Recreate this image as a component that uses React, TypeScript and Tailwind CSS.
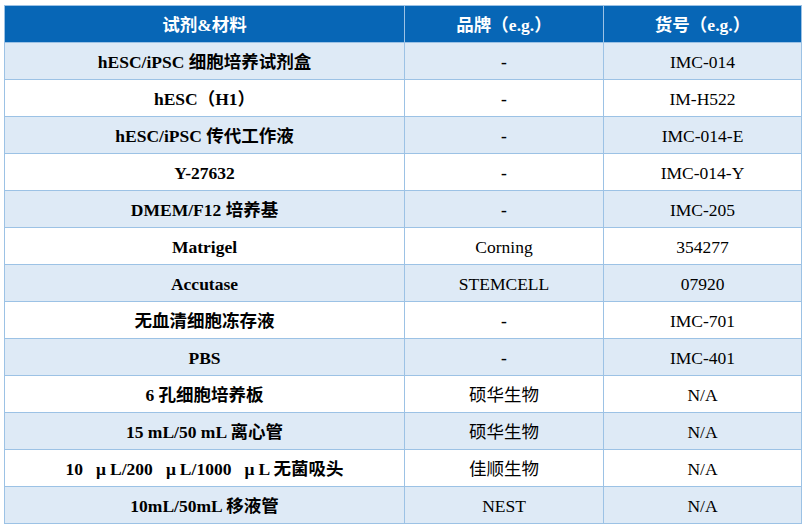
const rows: [string, string, string][] = [
  ["hESC/iPSC 细胞培养试剂盒", "-", "IMC-014"],
  ["hESC（H1）", "-", "IM-H522"],
  ["hESC/iPSC 传代工作液", "-", "IMC-014-E"],
  ["Y-27632", "-", "IMC-014-Y"],
  ["DMEM/F12 培养基", "-", "IMC-205"],
  ["Matrigel", "Corning", "354277"],
  ["Accutase", "STEMCELL", "07920"],
  ["无血清细胞冻存液", "-", "IMC-701"],
  ["PBS", "-", "IMC-401"],
  ["6 孔细胞培养板", "硕华生物", "N/A"],
  ["15 mL/50 mL 离心管", "硕华生物", "N/A"],
  ["tips", "佳顺生物", "N/A"],
  ["10mL/50mL 移液管", "NEST", "N/A"],
]

// the μ in the source table comes from a full-width CJK font
const Mu = () => <span className="mr-[4px] font-[Liberation_Serif]">μ</span>

function Tips() {
  return (
    <>
      10{"\u00a0\u00a0 "}
      <Mu />L/200{"\u00a0\u00a0 "}
      <Mu />L/1000{"\u00a0\u00a0 "}
      <Mu />L 无菌吸头
    </>
  )
}

export default function App() {
  return (
    <div
      className="w-[806px] h-[531px] bg-white pl-[4px] pt-[5px] text-[17.5px] text-black"
      style={{ fontFamily: '"Liberation Serif", "Noto Sans CJK SC", serif' }}
    >
      <table className="w-[797px] border-collapse table-fixed">
        <colgroup>
          <col className="w-[400px]" />
          <col className="w-[199px]" />
          <col className="w-[198px]" />
        </colgroup>
        <thead>
          <tr className="h-[37px] bg-[#0766b6] text-white font-bold">
            <th className="border border-[#9cc2e5] p-0 pt-[3px] font-bold">试剂&amp;材料</th>
            <th className="border border-[#9cc2e5] p-0 pt-[3px] font-bold">品牌（e.g.）</th>
            <th className="border border-[#9cc2e5] p-0 pt-[3px] font-bold">货号（e.g.）</th>
          </tr>
        </thead>
        <tbody>
          {rows.map(([name, brand, code], i) => (
            <tr key={i} className={`h-[37px] ${i % 2 === 0 ? "bg-[#deeaf6]" : "bg-white"}`}>
              <td className="border border-[#9cc2e5] p-0 pt-[3px] text-center font-bold whitespace-pre">
                {name === "tips" ? <Tips /> : name}
              </td>
              <td className={`border border-[#9cc2e5] p-0 pt-[3px] text-center ${brand === "-" ? "font-bold" : ""}`}>{brand}</td>
              <td className="border border-[#9cc2e5] p-0 pt-[3px] text-center">{code}</td>
            </tr>
          ))}
        </tbody>
      </table>
    </div>
  )
}
